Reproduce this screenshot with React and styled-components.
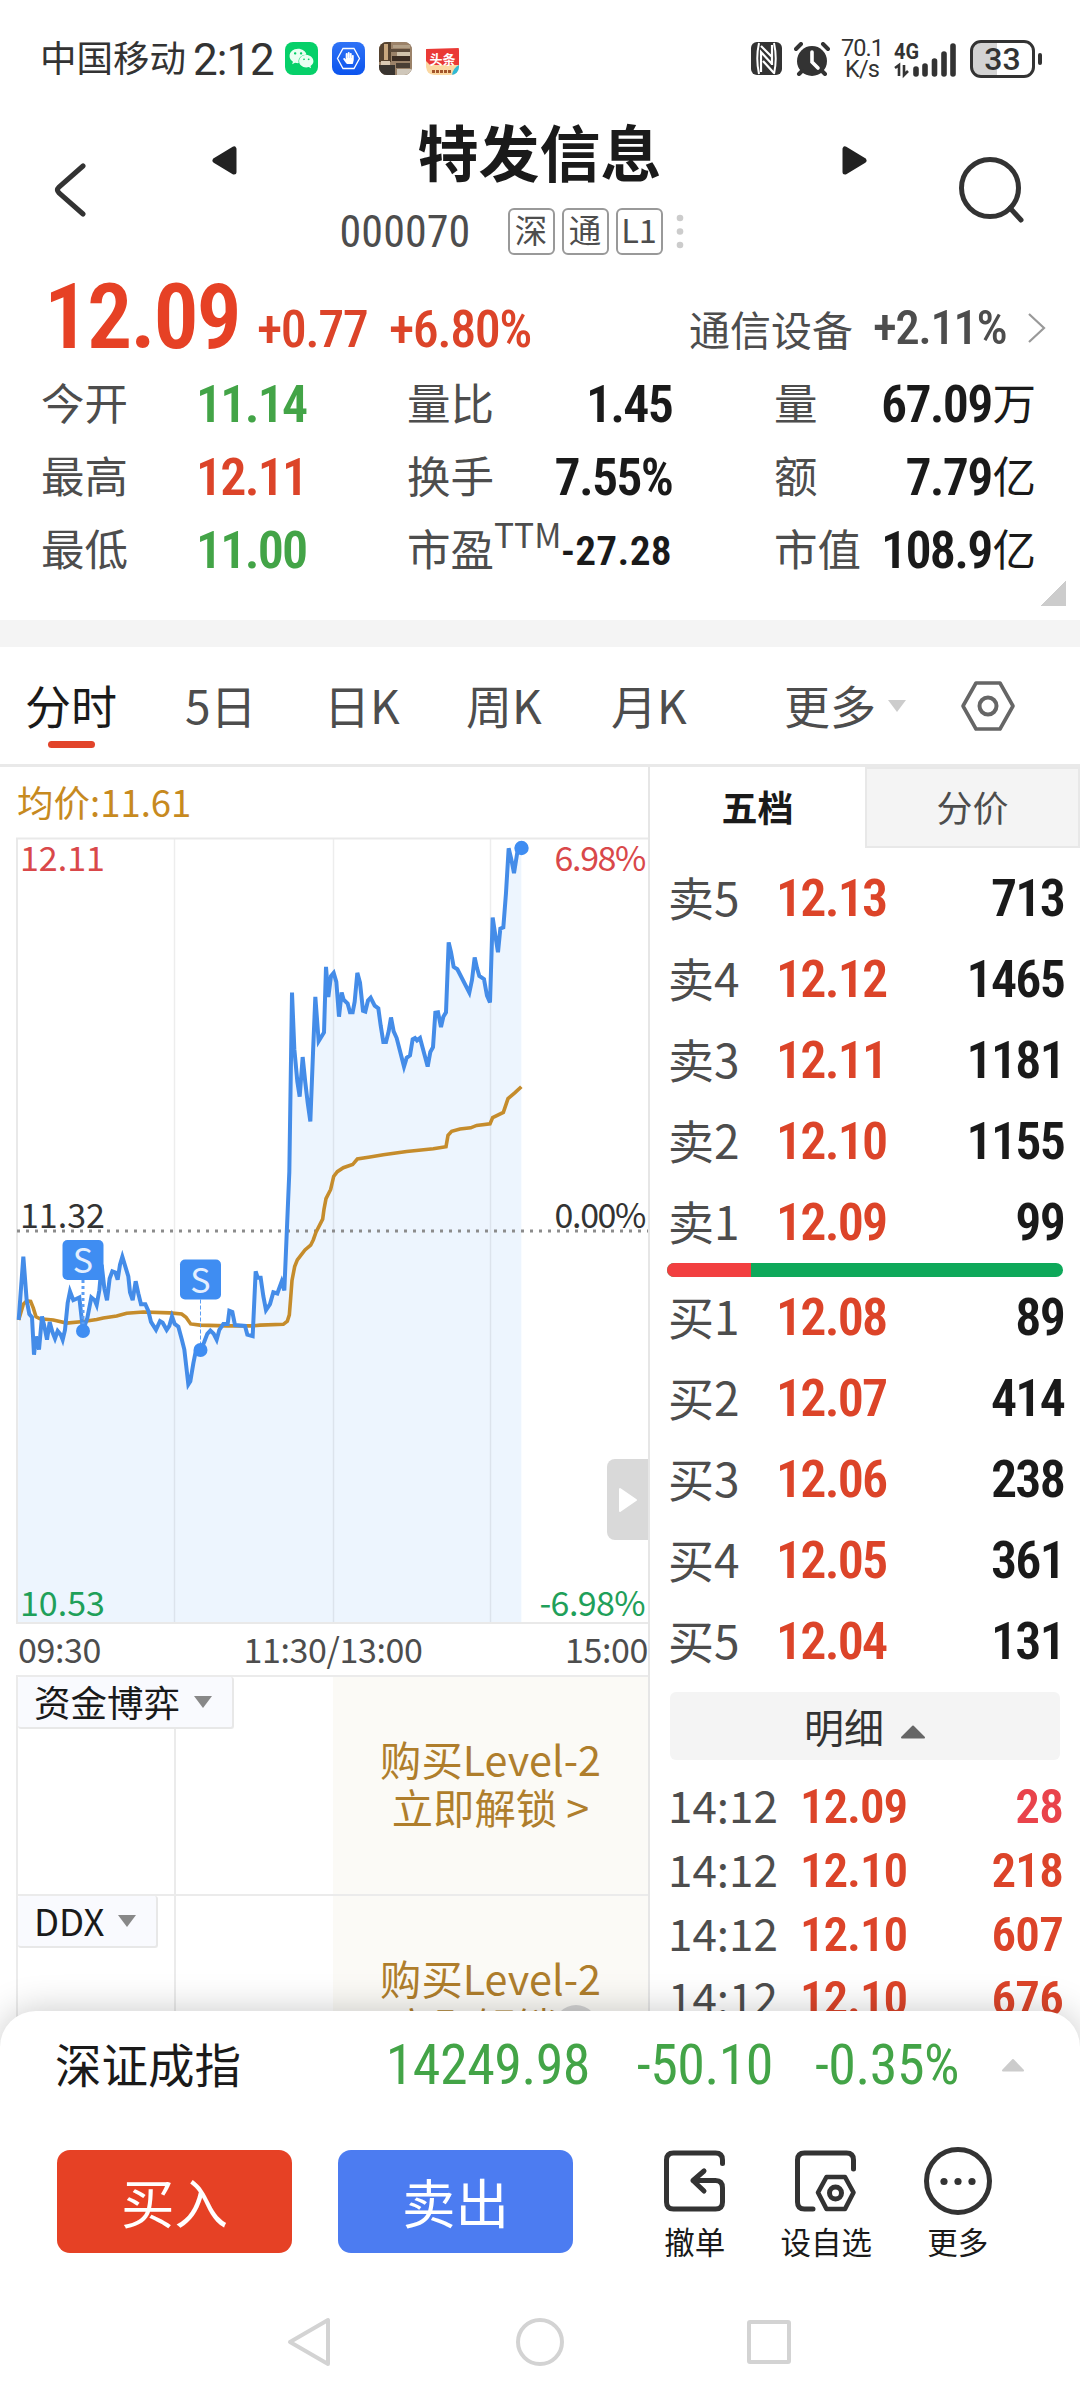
import React from 'react';
import styled, { createGlobalStyle, css } from 'styled-components';
import { FaWeixin, FaHandPaper } from 'react-icons/fa';

const GlobalStyle = createGlobalStyle`
  * {
    box-sizing: border-box;
  }

  body {
    margin: 0;
    background: #fff;
    font-family: 'Noto Sans CJK SC', sans-serif;
    color: #1a1a1a;
  }
`;

const RED = '#dc4429';
const GREEN = '#43a447';

const stats = [
  [['今开', '11.14', GREEN], ['量比', '1.45'], ['量', '67.09', '万']],
  [['最高', '12.11', RED], ['换手', '7.55%'], ['额', '7.79', '亿']],
  [['最低', '11.00', GREEN], ['市盈', '-27.28'], ['市值', '108.9', '亿']],
];

const sells = [
  ['卖5', '12.13', '713'],
  ['卖4', '12.12', '1465'],
  ['卖3', '12.11', '1181'],
  ['卖2', '12.10', '1155'],
  ['卖1', '12.09', '99'],
];

const buys = [
  ['买1', '12.08', '89'],
  ['买2', '12.07', '414'],
  ['买3', '12.06', '238'],
  ['买4', '12.05', '361'],
  ['买5', '12.04', '131'],
];

const ticks = [
  ['12.09', '28', '#e9434b'],
  ['12.10', '218', RED],
  ['12.10', '607', RED],
  ['12.10', '676', RED],
];

const pricePoints =
  '56,1315 70,1155 80,1265 88,1300 96,1308 102,1403 108,1357 117,1390 126,1306 132,1327 141,1365 149,1320 157,1345 165,1362 173,1343 182,1352 188,1365 195,1340 203,1272 210,1243 220,1265 228,1262 238,1258 249,1342 262,1310 274,1258 284,1265 290,1277 298,1240 305,1175 313,1235 321,1265 329,1210 337,1192 346,1195 353,1213 360,1175 367,1155 376,1180 385,1205 390,1245 398,1265 407,1217 415,1248 423,1275 436,1275 445,1292 453,1320 468,1340 480,1318 488,1322 500,1340 508,1330 516,1306 524,1325 535,1332 545,1363 553,1390 565,1478 571,1470 580,1425 587,1395 602,1392 612,1372 622,1350 631,1342 641,1350 650,1365 658,1340 670,1325 683,1325 688,1292 697,1295 705,1328 735,1330 742,1352 758,1356 767,1192 773,1208 782,1208 790,1255 798,1290 810,1275 820,1245 832,1248 845,1218 853,1240 868,940 876,487 883,630 892,712 899,750 908,650 916,715 923,765 931,813 939,640 946,498 956,610 972,588 978,422 985,498 993,445 1001,437 1009,460 1017,548 1025,487 1031,505 1043,515 1050,537 1058,537 1064,510 1072,437 1080,462 1089,533 1096,535 1104,507 1112,500 1124,520 1135,527 1142,570 1150,612 1158,612 1166,585 1173,550 1181,585 1190,602 1212,674 1220,652 1230,646 1238,605 1245,602 1251,608 1260,602 1283,674 1291,637 1299,625 1306,538 1314,537 1323,574 1330,548 1338,537 1346,360 1353,385 1361,422 1372,428 1408,487 1416,455 1424,398 1431,425 1438,445 1452,453 1461,495 1470,512 1478,297 1487,348 1494,385 1501,325 1510,322 1518,235 1526,122 1534,150 1542,185 1552,132 1564,122';

const averagePoints =
  '56,1315 70,1275 80,1267 92,1268 100,1285 108,1307 120,1312 160,1315 200,1323 250,1319 290,1314 310,1310 350,1305 380,1298 430,1295 510,1297 545,1300 558,1308 572,1325 600,1328 680,1330 760,1330 780,1328 850,1326 862,1318 868,1302 872,1260 876,1215 884,1180 892,1163 915,1138 932,1126 940,1112 948,1093 968,1060 972,1035 978,1008 992,985 1001,952 1012,940 1030,930 1058,922 1072,908 1110,903 1150,897 1220,889 1300,882 1338,877 1344,848 1355,838 1380,832 1412,829 1430,823 1470,819 1478,803 1510,790 1524,755 1545,740 1564,725';

const StatusBar = () => (
  <Status>
    <Carrier>中国移动</Carrier>
    <Clock>2:12</Clock>
    <AppIcons>
      <AppIcon $bg="#06d069">
        <FaWeixin size={25} color="#e9fff2" />
      </AppIcon>
      <AppIcon $bg="linear-gradient(#2f73f6, #0c54ee)">
        <svg width="33" height="33" viewBox="0 0 33 33">
          <path d="M11 6.5h11l5.5 10L22 26.5H11L5.5 16.5z" fill="none" stroke="#fff" strokeWidth="1.3" />
          <FaHandPaper x="10.5" y="10" size={12} color="#fff" />
        </svg>
      </AppIcon>
      <AppIcon $bg="#8a7562">
        <svg width="33" height="33" viewBox="0 0 33 33">
          <rect width="33" height="33" fill="#9b8269" />
          <rect width="12" height="20" fill="#55422f" />
          <rect x="5" y="2" width="4" height="16" fill="#c9a77d" />
          <rect x="14" y="3" width="17" height="3" fill="#b3a087" />
          <rect x="11" y="7" width="20" height="3" fill="#5d4b3b" />
          <rect x="18" y="10" width="13" height="5" fill="#d0c2ab" />
          <rect x="13" y="14" width="18" height="5" fill="#3b2c22" />
          <rect y="23" width="16" height="10" fill="#39342f" />
          <rect x="2" y="19" width="9" height="4" fill="#d9c9b3" />
          <rect x="17" y="21" width="14" height="5" fill="#4a3e34" />
          <rect x="18" y="27" width="15" height="6" fill="#cfc7ba" />
        </svg>
      </AppIcon>
      <AppIcon>
        <svg width="33" height="33" viewBox="0 0 33 33">
          <path d="M0 18h33v7q0 8-8 8H8q-8 0-8-8z" fill="#fbd8a2" />
          <path d="M0 7l33-1v17H4L0 19z" fill="#ea3a36" />
          <text x="16.5" y="21.5" fontSize="13" fontWeight="700" textAnchor="middle" fill="#fff">头条</text>
          <path d="M6 29.5h19" stroke="#a3552b" strokeWidth="3" strokeDasharray="3 1" />
          <path d="M33 23v4q0 6-7 6 1-7 7-10z" fill="#2fb9d6" />
        </svg>
      </AppIcon>
    </AppIcons>
    <StatusRight>
      <svg width="31" height="33" viewBox="0 0 31 33">
        <rect width="31" height="33" rx="6" fill="#333" />
        <path d="M8 1C6 10 6 23 8 32M23 1c2 9 2 22 0 31" fill="none" stroke="#fff" strokeWidth="2" />
        <path d="M10 30V10l11 12M10 4l11 11M21 3v20M12 19l11 12" fill="none" stroke="#fff" strokeWidth="2.2" />
      </svg>
      <svg width="36" height="34" viewBox="0 0 36 34">
        <circle cx="18" cy="19" r="15" fill="#333" />
        <path d="M2 7l5-5M34 7l-5-5M8 29l-3 3M28 29l3 3" stroke="#333" strokeWidth="4" strokeLinecap="round" />
        <path d="M18 10v10l6 6" fill="none" stroke="#fff" strokeWidth="3.6" strokeLinecap="round" />
      </svg>
      <NetSpeed>
        <span>70.1</span>
        <span>K/s</span>
      </NetSpeed>
      <Signal viewBox="0 0 64 36">
        <text x="0" y="17.5" fontFamily="Roboto" fontWeight="700" fontSize="22.5" textLength="25" lengthAdjust="spacingAndGlyphs" fill="#333">4G</text>
        <path d="M1 27l4-3v11M10 24v10l4-4" fill="none" stroke="#333" strokeWidth="2.6" />
        <path d="M22 28v5M31 25v8M40.5 20v13M50 13v20M59 5v28" stroke="#333" strokeWidth="5.6" strokeLinecap="round" />
      </Signal>
      <Battery>33</Battery>
      <BatteryNub />
    </StatusRight>
  </Status>
);

const Header = () => (
  <HeaderBar>
    <svg width="34" height="56" viewBox="0 0 34 56">
      <path d="M29 4L5 25q-3 3 0 6l24 21" fill="none" stroke="#333" strokeWidth="5" strokeLinecap="round" />
    </svg>
    <TitleBlock>
      <TitleRow>
        <svg width="25" height="29" viewBox="0 0 25 29">
          <path d="M22 3v23L3 14.5z" fill="#222" stroke="#222" strokeWidth="5" strokeLinejoin="round" />
        </svg>
        <Title>特发信息</Title>
        <svg width="25" height="29" viewBox="0 0 25 29">
          <path d="M3 3v23l19-11.5z" fill="#222" stroke="#222" strokeWidth="5" strokeLinejoin="round" />
        </svg>
      </TitleRow>
      <CodeRow>
        <Code>000070</Code>
        <Badge>深</Badge>
        <Badge>通</Badge>
        <Badge>L1</Badge>
        <svg width="8" height="36" viewBox="0 0 8 36">
          <circle cx="4" cy="4" r="3.3" fill="#ccc" />
          <circle cx="4" cy="17.5" r="3.3" fill="#ccc" />
          <circle cx="4" cy="31" r="3.3" fill="#ccc" />
        </svg>
      </CodeRow>
    </TitleBlock>
    <svg width="66" height="66" viewBox="0 0 66 66">
      <circle cx="31" cy="31" r="28.5" fill="none" stroke="#333" strokeWidth="5" />
      <path d="M51 51l11 12" stroke="#333" strokeWidth="5" strokeLinecap="round" />
    </svg>
  </HeaderBar>
);

const Quote = () => (
  <QuoteBlock>
    <PriceRow>
      <BigPrice>12.09</BigPrice>
      <Change $width={132}>+0.77</Change>
      <Change>+6.80%</Change>
      <Industry>
        通信设备
        <IndustryChange>+2.11%</IndustryChange>
        <svg width="20" height="32" viewBox="0 0 20 32">
          <path d="M2 2l15 14L2 30" fill="none" stroke="#999" strokeWidth="2.2" />
        </svg>
      </Industry>
    </PriceRow>
    {stats.map(([a, b, c]) => (
      <StatRow key={a[0]}>
        <StatLabel>{a[0]}</StatLabel>
        <Num $color={a[2]}>{a[1]}</Num>
        <StatLabel>
          {b[0]}
          {b[0] === '市盈' && <Sup>TTM</Sup>}
        </StatLabel>
        {b[0] === '市盈' ? (
          <Num $right $size={41.5} $spacing={0.3}>{b[1]}</Num>
        ) : (
          <Num $right>{b[1]}</Num>
        )}
        <StatLabel $indent>{c[0]}</StatLabel>
        <Amount>
          <Num $right>{c[1]}</Num>
          <Unit>{c[2]}</Unit>
        </Amount>
      </StatRow>
    ))}
    <Corner />
  </QuoteBlock>
);

const Tabs = () => (
  <TabBar>
    <Tab $active $width={160}>分时</Tab>
    <Tab $width={139}>5日</Tab>
    <Tab $width={142}>日K</Tab>
    <Tab $width={145}>周K</Tab>
    <Tab $width={173}>月K</Tab>
    <Tab $width={103}>更多</Tab>
    <svg width="20" height="14" viewBox="0 0 20 14">
      <path d="M1 1h18l-9 12z" fill="#ccc" />
    </svg>
    <Settings viewBox="0 0 56 52">
      <path d="M16 3h24l13 23-13 23H16L3 26z" fill="none" stroke="#666" strokeWidth="3.6" strokeLinejoin="round" />
      <circle cx="28" cy="26" r="8.5" fill="none" stroke="#666" strokeWidth="4" />
    </Settings>
  </TabBar>
);

const Marker = ({ x, y, toY, dash, width }) => (
  <g>
    <path d={`M${x} ${y + 40}V${toY}`} stroke="#5d9ef3" strokeWidth={width} strokeDasharray={dash} />
    <rect x={x - 20.5} y={y} width="41" height="40" rx="5" fill="#3f8df2" />
    <text x={x} y={y + 33} fontSize="34" textAnchor="middle" fill="#e3efff">S</text>
    <circle cx={x} cy={toY} r="7" fill="#3f8df2" />
  </g>
);

const Chart = () => (
  <ChartBox>
    <Plot viewBox="0 0 632 786">
      <svg width="632" height="786" viewBox="48 96 1896 1988" preserveAspectRatio="none">
        <polygon points={`${pricePoints} 1564,2084 52,2084`} fill="#edf5fe" />
      </svg>
      <path d="M158.5 0v786M317.5 0v786M474.5 0v786" stroke="#000" strokeOpacity="0.07" strokeWidth="1.5" />
      <path d="M0 0.5h632M1 0v786M0 785h632" fill="none" stroke="#e9e9e9" strokeWidth="2" />
      <path d="M1 393h631" stroke="#8c8c8c" strokeWidth="3" strokeDasharray="3 6" />
      <svg width="632" height="786" viewBox="48 96 1896 1988" preserveAspectRatio="none">
        <polyline points={averagePoints} fill="none" stroke="#c58c2c" strokeWidth="3.6" vectorEffect="non-scaling-stroke" />
        <polyline points={pricePoints} fill="none" stroke="#448ce8" strokeWidth="4" vectorEffect="non-scaling-stroke" />
      </svg>
      <Marker x={67} y={402} toY={493} dash="3 3" width={3} />
      <Marker x={184.5} y={421.5} toY={512} dash="4 2" width={1} />
      <circle cx="505.5" cy="10" r="7.2" fill="#3f8df2" />
      <g fontSize="34">
        <text x="4" y="33" fill="#d9484a">12.11</text>
        <text x="629" y="33" textAnchor="end" letterSpacing="-1.4" fill="#d9484a">6.98%</text>
        <text x="4" y="390" fill="#333">11.32</text>
        <text x="629" y="390" textAnchor="end" letterSpacing="-1.4" fill="#333">0.00%</text>
        <text x="4" y="778" fill="#1fa05a">10.53</text>
        <text x="629" y="778" textAnchor="end" letterSpacing="-0.6" fill="#1fa05a">-6.98%</text>
      </g>
    </Plot>
    <SideToggle>
      <svg width="20" height="26" viewBox="0 0 20 26">
        <path d="M2 2v22l16-11z" fill="#fff" stroke="#fff" strokeWidth="2" strokeLinejoin="round" />
      </svg>
    </SideToggle>
  </ChartBox>
);

const Indicator = ({ name }) => (
  <Panel>
    <PanelLeft>
      <PanelTag>
        {name}
        <svg width="20" height="14" viewBox="0 0 20 14">
          <path d="M1 1h18l-9 12z" fill="#888" />
        </svg>
      </PanelTag>
    </PanelLeft>
    <Unlock>
      <span>购买Level-2</span>
      <span>立即解锁 &gt;</span>
    </Unlock>
  </Panel>
);

const PriceLevels = ({ rows, top }) => (
  <Levels $top={top}>
    {rows.map(([label, price, volume]) => (
      <Level key={label}>
        <LevelLabel>{label}</LevelLabel>
        <Num $color={RED}>{price}</Num>
        <Num $right>{volume}</Num>
      </Level>
    ))}
  </Levels>
);

const OrderBook = () => (
  <div>
    <BookTabs>
      <BookTab $active>五档</BookTab>
      <BookTab>分价</BookTab>
    </BookTabs>
    <PriceLevels rows={sells} top={10} />
    <Ratio>
      <RatioSell />
    </Ratio>
    <PriceLevels rows={buys} top={0} />
    <Detail>
      明细
      <svg width="26" height="14" viewBox="0 0 26 14">
        <path d="M13 1.5L24 12.5H2z" fill="#666" stroke="#666" strokeWidth="2" strokeLinejoin="round" />
      </svg>
    </Detail>
    {ticks.map(([price, volume, color], i) => (
      <Tick key={i}>
        <TickTime>14:12</TickTime>
        <Num $color={RED} $size={49} $spacing={-1.1}>{price}</Num>
        <Num $right $color={color} $size={49} $spacing={-0.8}>{volume}</Num>
      </Tick>
    ))}
  </div>
);

const BottomSheet = () => (
  <Sheet>
    <IndexRow>
      <IndexName>深证成指</IndexName>
      <IndexNum $width={288}>14249.98</IndexNum>
      <IndexNum $width={183}>-50.10</IndexNum>
      <IndexNum $width={186}>-0.35%</IndexNum>
      <svg width="24" height="14" viewBox="0 0 24 14">
        <path d="M12 2L22 12.5H2z" fill="#ccc" stroke="#ccc" strokeWidth="2" strokeLinejoin="round" />
      </svg>
    </IndexRow>
    <Actions>
      <TradeButton $bg="#e64125">买入</TradeButton>
      <TradeButton $bg="#4c7cf1">卖出</TradeButton>
      <Tools>
        <Tool>
          <svg width="70" height="70" viewBox="0 0 70 70">
            <path d="M62.5 17.5V14q0-7-7-7h-42q-7 0-7 7v42q0 7 7 7h42q7 0 7-7V42q0-7.5-7-7.5H33M44 25L33 34.5 44 45" fill="none" stroke="#333" strokeWidth="5" strokeLinecap="round" strokeLinejoin="round" />
          </svg>
          撤单
        </Tool>
        <Tool>
          <svg width="70" height="70" viewBox="0 0 70 70">
            <path d="M62.5 23V14q0-7-7-7h-42q-7 0-7 7v42q0 7 7 7h8.5" fill="none" stroke="#333" strokeWidth="5" strokeLinecap="round" />
            <path d="M35.5 31H54l8.5 15.5L54 63H35.5L27 46.5z" fill="none" stroke="#333" strokeWidth="4.6" strokeLinejoin="round" />
            <circle cx="44.5" cy="47" r="6" fill="none" stroke="#333" strokeWidth="5" />
          </svg>
          设自选
        </Tool>
        <Tool>
          <svg width="70" height="70" viewBox="0 0 70 70">
            <circle cx="35" cy="35" r="31.5" fill="none" stroke="#333" strokeWidth="5" />
            <circle cx="21" cy="35.5" r="3.6" fill="#333" />
            <circle cx="35" cy="35.5" r="3.6" fill="#333" />
            <circle cx="49" cy="35.5" r="3.6" fill="#333" />
          </svg>
          更多
        </Tool>
      </Tools>
    </Actions>
    <NavBar>
      <svg width="50" height="50" viewBox="0 0 50 50">
        <path d="M43 3v44L5 25z" fill="none" stroke="#d3d3d3" strokeWidth="4" strokeLinejoin="round" />
      </svg>
      <svg width="50" height="50" viewBox="0 0 50 50">
        <circle cx="25" cy="25" r="22" fill="none" stroke="#d3d3d3" strokeWidth="4" />
      </svg>
      <svg width="50" height="50" viewBox="0 0 50 50">
        <rect x="4" y="5" width="40" height="40" rx="1" fill="none" stroke="#d3d3d3" strokeWidth="4" />
      </svg>
    </NavBar>
  </Sheet>
);

const App = () => {
  return (
    <>
      <GlobalStyle />
      <Screen>
        <StatusBar />
        <Header />
        <Quote />
        <Divider />
        <Tabs />
        <Main>
          <ChartPane>
            <Average>均价:11.61</Average>
            <Chart />
            <TimeAxis>
              <span>09:30</span>
              <span>11:30/13:00</span>
              <span>15:00</span>
            </TimeAxis>
            <Indicator name="资金博弈" />
            <Indicator name="DDX" />
          </ChartPane>
          <OrderBook />
        </Main>
        <FloatingDot />
        <BottomSheet />
      </Screen>
    </>
  );
};

const Screen = styled.div`
  position: relative;
  width: 1080px;
  height: 2400px;
  overflow: hidden;
  background: #fff;
`;

// narrow figures shared by every price and volume
const figures = css`
  font-family: 'Roboto', sans-serif;
  font-stretch: 75%;
  white-space: nowrap;
`;

const Num = styled.span`
  ${figures}
  font-size: ${({ $size }) => $size || 52}px;
  font-weight: 600;
  line-height: 1;
  letter-spacing: ${({ $spacing }) => $spacing || -1.8}px;
  color: ${({ $color }) => $color || '#1a1a1a'};
  text-align: ${({ $right }) => ($right ? 'right' : 'left')};
`;

const Status = styled.div`
  display: flex;
  align-items: center;
  height: 117px;
  padding: 0 38px 0 40px;
  color: #333;
`;

const Carrier = styled.span`
  font-size: 36.5px;
  line-height: 60px;
  margin-top: -4px;
`;

const Clock = styled.span`
  margin-left: 7px;
  font-family: 'Roboto', sans-serif;
  font-size: 44px;
  letter-spacing: -1px;
  line-height: 60px;
  margin-top: 3px;
`;

const AppIcons = styled.div`
  display: flex;
  gap: 14px;
  margin-left: 11px;
`;

const AppIcon = styled.div`
  display: flex;
  align-items: center;
  justify-content: center;
  width: 33px;
  height: 33px;
  border-radius: 8px;
  overflow: hidden;
  background: ${({ $bg }) => $bg || 'none'};
`;

const StatusRight = styled.div`
  display: flex;
  align-items: center;
  margin-left: auto;
  gap: 12px;
`;

const NetSpeed = styled.div`
  display: flex;
  flex-direction: column;
  align-items: center;
  width: 40px;
  font-family: 'Roboto', sans-serif;
  font-size: 23.5px;
  letter-spacing: -0.9px;
  line-height: 21px;
`;

const Signal = styled.svg`
  width: 64px;
  height: 36px;
  overflow: visible;
`;

const Battery = styled.div`
  display: flex;
  align-items: center;
  justify-content: center;
  width: 65px;
  height: 38px;
  border: 3px solid #333;
  border-radius: 11px;
  background: linear-gradient(to right, #d3d3d3 0, #d3d3d3 24px, #fff 24px, #fff 100%) no-repeat;
  font-family: 'Roboto', sans-serif;
  font-size: 32px;
  font-weight: 500;
`;

const BatteryNub = styled.div`
  width: 4px;
  height: 12px;
  margin-left: -9px;
  border-radius: 2px;
  background: #333;
`;

const HeaderBar = styled.div`
  display: flex;
  align-items: center;
  justify-content: space-between;
  height: 145px;
  padding: 0 55px 0 54px;
`;

const TitleBlock = styled.div`
  width: 656px;
  margin-left: 32px;
`;

const TitleRow = styled.div`
  display: flex;
  align-items: center;
  justify-content: space-between;
  height: 84px;
`;

const Title = styled.h1`
  margin: -19px 0 0;
  font-size: 61px;
  font-weight: 700;
  line-height: 84px;
`;

const CodeRow = styled.div`
  display: flex;
  align-items: center;
  height: 58px;
  padding-left: 128px;
`;

const Code = styled.span`
  ${figures}
  width: 168px;
  font-size: 44px;
  letter-spacing: 0.1px;
  line-height: 44px;
  color: #4d4d4d;
`;

const Badge = styled.span`
  width: 47px;
  height: 47px;
  margin-right: 7px;
  border: 2px solid #999;
  border-radius: 6px;
  font-size: 32.5px;
  line-height: 38px;
  text-align: center;
  color: #4d4d4d;

  & + svg {
    margin-left: 6px;
  }
`;

const QuoteBlock = styled.div`
  height: 358px;
`;

const PriceRow = styled.div`
  display: flex;
  align-items: center;
  height: 106px;
  padding-left: 44px;
`;

const BigPrice = styled.span`
  ${figures}
  width: 213px;
  margin-top: 6px;
  font-size: 90px;
  font-weight: 600;
  letter-spacing: -2.2px;
  line-height: 90px;
  color: #e64125;
`;

const Change = styled.span`
  ${figures}
  width: ${({ $width }) => ($width ? `${$width}px` : 'auto')};
  margin-top: 29px;
  font-size: 52px;
  font-weight: 500;
  letter-spacing: -1.5px;
  color: ${RED};
`;

const Industry = styled.div`
  display: flex;
  align-items: center;
  margin: 26px 33px 0 auto;
  height: 50px;
  font-size: 41px;
  color: #4d4d4d;
  line-height: 46px;
`;

const IndustryChange = styled.span`
  ${figures}
  width: 154px;
  margin-left: 20px;
  font-size: 49px;
  font-weight: 500;
  letter-spacing: -1.5px;
`;

const StatRow = styled.div`
  display: grid;
  grid-template-columns: 155px 211px 110px 155px 204px 160px;
  align-items: center;
  height: 73px;
  padding-left: 41px;
  font-size: 43.5px;
  line-height: 60px;
  color: #4d4d4d;
  white-space: nowrap;
`;

const StatLabel = styled.span`
  margin-top: -6px;
  padding-left: ${({ $indent }) => ($indent ? 102 : 0)}px;
`;

const Sup = styled.sup`
  font-size: 33.5px;
  line-height: 0;
  vertical-align: 18px;
`;

const Amount = styled.div`
  display: flex;
  align-items: center;
  justify-content: flex-end;
  gap: 1px;
`;

const Unit = styled.span`
  margin-top: -6px;
  color: #1a1a1a;
`;

const Corner = styled.div`
  width: 25px;
  height: 25px;
  margin: -6px 14px 0 auto;
  background: linear-gradient(135deg, transparent 50%, #ccc 50%);
`;

const Divider = styled.div`
  height: 27px;
  background: #f4f4f4;
`;

const TabBar = styled.div`
  display: flex;
  align-items: center;
  height: 120px;
  padding-left: 25px;
  border-bottom: 3px solid #e9e9e9;
`;

const Tab = styled.div`
  position: relative;
  width: ${({ $width }) => $width}px;
  margin-top: -3px;
  font-size: 46px;
  line-height: 60px;
  color: ${({ $active }) => ($active ? '#1a1a1a' : '#4d4d4d')};

  &::after {
    content: '';
    display: ${({ $active }) => ($active ? 'block' : 'none')};
    position: absolute;
    left: 23px;
    top: 67px;
    width: 47px;
    height: 7px;
    border-radius: 4px;
    background: #e2442a;
  }
`;

const Settings = styled.svg`
  width: 56px;
  height: 52px;
  margin-left: 53px;
`;

const Main = styled.div`
  display: grid;
  grid-template-columns: 650px 430px;
  height: 1633px;
`;

const ChartPane = styled.div`
  border-right: 2px solid #e6e6e6;
  padding-left: 16px;
`;

const Average = styled.div`
  height: 71px;
  padding-left: 1px;
  font-size: 36.5px;
  line-height: 69px;
  color: #c78a1f;
`;

const ChartBox = styled.div`
  position: relative;
  height: 786px;
`;

const Plot = styled.svg`
  display: block;
  width: 632px;
  height: 786px;
  overflow: visible;
`;

const SideToggle = styled.div`
  position: absolute;
  right: 0;
  top: 621px;
  display: flex;
  align-items: center;
  padding-left: 11px;
  width: 41px;
  height: 81px;
  border-radius: 8px 0 0 8px;
  background: #d9d9d9;
`;

const TimeAxis = styled.div`
  display: flex;
  justify-content: space-between;
  height: 51px;
  padding-left: 2px;
  font-size: 34px;
  letter-spacing: -0.4px;
  line-height: 49px;
  color: #4d4d4d;
`;

const Panel = styled.div`
  display: grid;
  grid-template-columns: 317px 315px;
  height: 219px;
  border-top: 2px solid #ebebeb;
`;

const PanelLeft = styled.div`
  border-left: 2px solid #ebebeb;
  background: linear-gradient(90deg, transparent 156px, #ebebeb 156px, #ebebeb 158px, transparent 158px);
`;

const PanelTag = styled.div`
  display: inline-flex;
  align-items: center;
  gap: 13px;
  height: 52px;
  padding: 0 19px 0 16px;
  border: 2px solid #e8e8e8;
  border-left: 0;
  border-top: 0;
  border-radius: 3px;
  background: #f9fafe;
  font-size: 36.5px;
  line-height: 46px;
  color: #1a1a1a;
`;

const Unlock = styled.div`
  display: flex;
  flex-direction: column;
  align-items: center;
  padding-top: 58px;
  background: #fbfaf6;
  font-size: 41.3px;
  line-height: 47.5px;
  color: #af7e2c;
`;

const BookTabs = styled.div`
  display: grid;
  grid-template-columns: 215px 215px;
  height: 81px;
`;

const BookTab = styled.div`
  border: ${({ $active }) => ($active ? 'none' : '2px solid #e8e8e8')};
  background: ${({ $active }) => ($active ? '#fff' : '#f4f4f4')};
  font-size: 36px;
  font-weight: ${({ $active }) => ($active ? 700 : 400)};
  line-height: ${({ $active }) => ($active ? 78 : 75)}px;
  text-align: center;
  color: ${({ $active }) => ($active ? '#1a1a1a' : '#4d4d4d')};
`;

const Levels = styled.div`
  padding: ${({ $top }) => $top}px 16px 0 18px;
`;

const Level = styled.div`
  display: grid;
  grid-template-columns: 108px 150px 1fr;
  align-items: center;
  height: 81px;
`;

const LevelLabel = styled.span`
  margin-top: -5px;
  font-size: 46px;
  line-height: 60px;
  color: #4d4d4d;
`;

const Ratio = styled.div`
  height: 14px;
  margin: 0 17px;
  border-radius: 7px;
  overflow: hidden;
  background: #0ea85a;
`;

const RatioSell = styled.div`
  width: 84px;
  height: 14px;
  background: #f23f40;
`;

const Detail = styled.div`
  display: flex;
  align-items: center;
  justify-content: center;
  gap: 16px;
  height: 68px;
  margin: 10px 20px 13px;
  border-radius: 6px;
  background: #f4f4f4;
  font-size: 40px;
  line-height: 58px;
  color: #333;

  svg {
    margin-top: 12px;
  }
`;

const Tick = styled.div`
  display: grid;
  grid-template-columns: 132px 150px 1fr;
  align-items: center;
  height: 64px;
  padding: 2px 17px 0 18px;
`;

const TickTime = styled.span`
  margin-top: -4px;
  font-size: 44px;
  line-height: 60px;
  color: #4d4d4d;
`;

const FloatingDot = styled.div`
  position: absolute;
  left: 554px;
  top: 2005px;
  width: 44px;
  height: 44px;
  border-radius: 50%;
  background: #d3d3d3;
`;

const Sheet = styled.div`
  position: absolute;
  left: 0;
  right: 0;
  bottom: 0;
  height: 389px;
  border-radius: 36px 36px 0 0;
  background: #fff;
  box-shadow: 0 0 36px rgba(0, 0, 0, 0.22);
`;

const IndexRow = styled.div`
  display: flex;
  align-items: center;
  height: 107px;
  padding-left: 55px;

  svg {
    margin-left: 42px;
  }
`;

const IndexName = styled.span`
  width: 247px;
  margin-top: -4px;
  font-size: 46.5px;
  line-height: 60px;
`;

const IndexNum = styled.span`
  ${figures}
  flex: none;
  width: ${({ $width }) => $width}px;
  font-size: 56px;
  font-weight: 450;
  letter-spacing: -0.5px;
  line-height: 60px;
  text-align: right;
  color: ${GREEN};
`;

const Actions = styled.div`
  display: flex;
  align-items: center;
  gap: 46px;
  height: 166px;
  padding-left: 57px;
`;

const TradeButton = styled.button`
  width: 235px;
  height: 103px;
  padding: 0;
  border: 0;
  border-radius: 13px;
  background: ${({ $bg }) => $bg};
  color: #fff;
  font-family: inherit;
  font-size: 53.5px;
  line-height: 90px;
`;

const Tools = styled.div`
  display: flex;
  margin: 7px 0 0 10px;
`;

const Tool = styled.div`
  display: flex;
  flex-direction: column;
  align-items: center;
  gap: 3px;
  width: 131.5px;
  font-size: 30.5px;
  line-height: 44px;
`;

const NavBar = styled.div`
  display: flex;
  justify-content: center;
  gap: 180px;
  padding-top: 33px;
`;

export default App;
